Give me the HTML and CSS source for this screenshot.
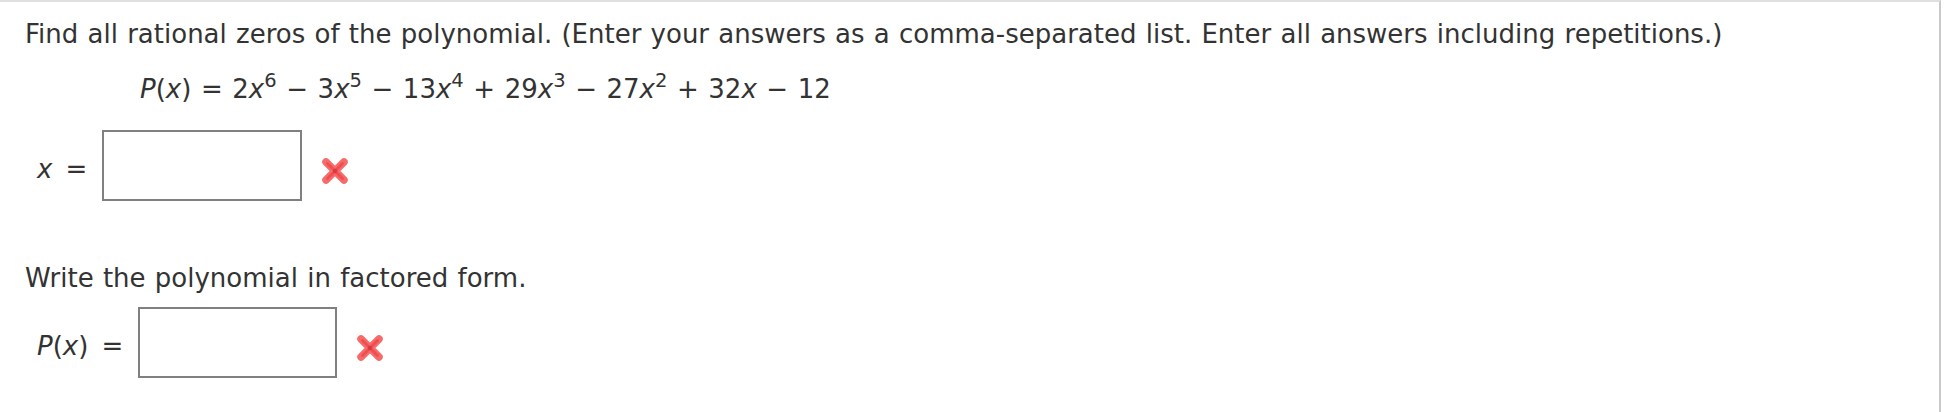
FILE: index.html
```html
<!DOCTYPE html>
<html lang="en">
<head>
<meta charset="utf-8">
<title>Rational zeros</title>
<link rel="stylesheet" href="styles.css">
</head>
<body>
<div class="panel">
  <p class="prompt">Find all rational zeros of the polynomial. (Enter your answers as a comma-separated list. Enter all answers including repetitions.)</p>
  <p class="formula"><i>P</i>(<i>x</i>) = 2<i>x</i><sup>6</sup> − 3<i>x</i><sup>5</sup> − 13<i>x</i><sup>4</sup> + 29<i>x</i><sup>3</sup> − 27<i>x</i><sup>2</sup> + 32<i>x</i> − 12</p>
  <div class="answer-row row-zeros">
    <span class="label"><i>x</i></span>
    <span class="eq">=</span>
    <span class="box"></span>
    <svg class="wrong" width="28" height="28" viewBox="0 0 28 28" aria-hidden="true">
      <g stroke-linecap="round">
        <path d="M5 5 L23 23 M23 5 L5 23" stroke="#f86a6a" stroke-width="7.5"/>
        <path d="M6.5 6.5 L21.5 21.5 M21.5 6.5 L6.5 21.5" stroke="#ef4f50" stroke-width="3"/>
        <circle cx="14" cy="14" r="2.2" fill="#d93a3b"/>
      </g>
    </svg>
  </div>
  <p class="prompt prompt-second">Write the polynomial in factored form.</p>
  <div class="answer-row row-factored">
    <span class="label"><i>P</i>(<i>x</i>)</span>
    <span class="eq">=</span>
    <span class="box"></span>
    <svg class="wrong" width="28" height="28" viewBox="0 0 28 28" aria-hidden="true">
      <g stroke-linecap="round">
        <path d="M5 5 L23 23 M23 5 L5 23" stroke="#f86a6a" stroke-width="7.5"/>
        <path d="M6.5 6.5 L21.5 21.5 M21.5 6.5 L6.5 21.5" stroke="#ef4f50" stroke-width="3"/>
        <circle cx="14" cy="14" r="2.2" fill="#d93a3b"/>
      </g>
    </svg>
  </div>
</div>
</body>
</html>
```
FILE: styles.css
```css
html, body {
  margin: 0;
  padding: 0;
  background: #ffffff;
}

.panel {
  box-sizing: border-box;
  width: 1941px;
  min-height: 430px;
  border-top: 2px solid #e0e0e0;
  border-right: 2px solid #c9c9c9;
  padding: 17px 0 0 25px;
  font-family: "DejaVu Sans", Verdana, sans-serif;
  font-size: 26px;
  line-height: 30px;
  color: #333333;
  word-spacing: 1px;
}

.prompt {
  margin: 0;
  white-space: nowrap;
}

.formula {
  margin: 25px 0 0 115px;
  white-space: nowrap;
  word-spacing: 1.3px;
}

.formula sup {
  font-size: 0.75em;
  line-height: 0;
  vertical-align: 11px;
}

.answer-row {
  display: flex;
  align-items: flex-start;
  padding-left: 12px;
}

.row-zeros {
  margin-top: 26px;
}

.prompt-second {
  margin-top: 62px;
}

.row-factored {
  margin-top: 14px;
}

.label {
  margin-top: 24px;
}

.eq {
  margin-top: 24px;
  margin-left: 13px;
}

.box {
  box-sizing: border-box;
  width: 200px;
  height: 71px;
  border: 2px solid #808080;
  background: #ffffff;
  margin-left: 15px;
}

.row-factored .box {
  width: 199px;
}

.wrong {
  margin-top: 27px;
  margin-left: 19px;
}
```
